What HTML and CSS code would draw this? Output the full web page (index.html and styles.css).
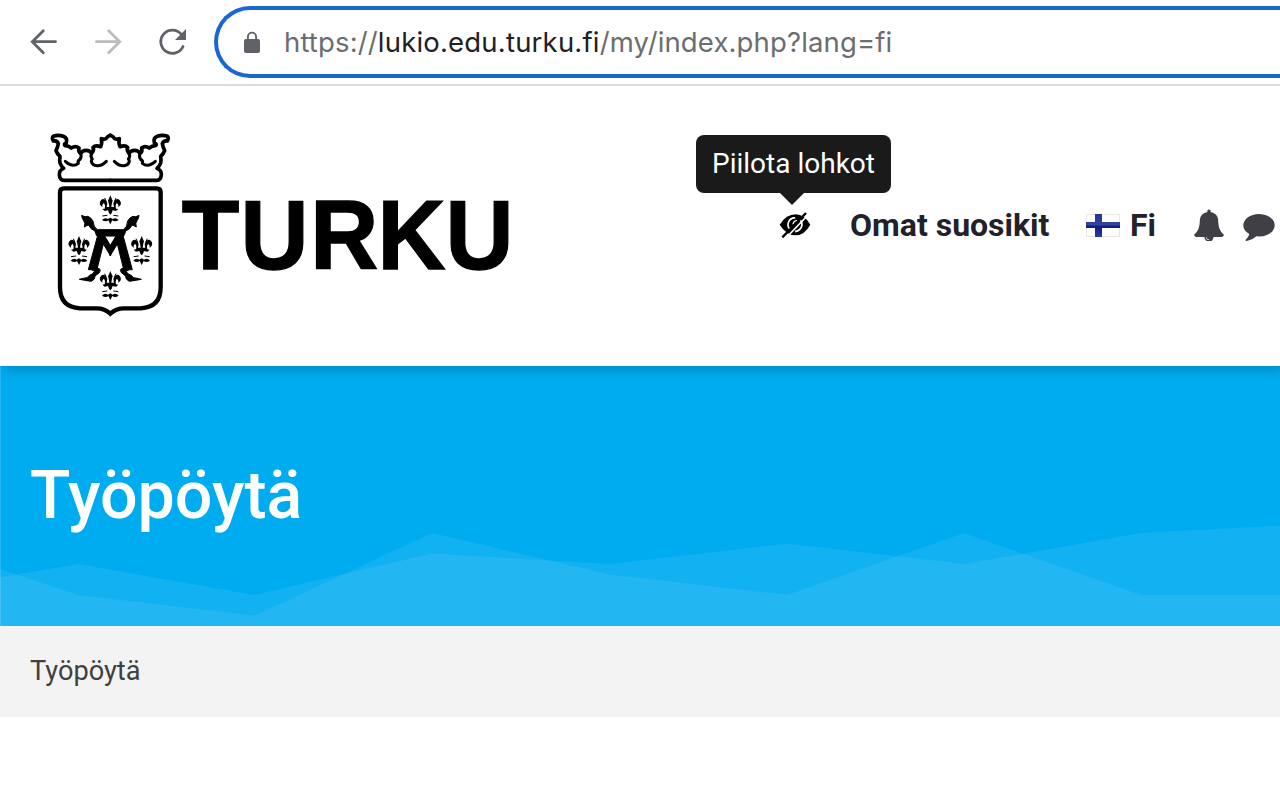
FILE: index.html
```html
<!DOCTYPE html>
<html lang="fi">
<head>
<meta charset="utf-8">
<title>Työpöytä</title>
<link rel="stylesheet" href="styles.css">
</head>
<body>
<div class="toolbar">
  <svg class="nav-icons" width="214" height="84" viewBox="0 0 214 84" fill="none" stroke-width="2.8" stroke-linecap="round">
    <path stroke="#5f6368" d="M55.500 41.700H32.500M43.300 30.700L32.300 41.700L43.300 52.700"/>
    <path stroke="#babcbe" d="M96.500 41.700H119.500M108.700 30.700L119.700 41.700L108.700 52.700"/>
    <path stroke="#5f6368" d="M181.300 34.300A11.600 11.600 0 1 0 183 46.500"/>
    <path fill="#5f6368" d="M186 29V40H175Z"/>
  </svg>
  <div class="address">
    <svg class="lock" width="18" height="24" viewBox="0 0 18 24"><rect x="1" y="9" width="16" height="14" rx="2" fill="#5f6368"/><path d="M4.900 10V6.700a4.100 4.100 0 0 1 8.200 0V10" fill="none" stroke="#5f6368" stroke-width="1.900"/></svg>
    <div class="url"><span class="scheme">https://</span><span class="host">lukio.edu.turku.fi</span><span class="path">/my/index.php?lang=fi</span></div>
  </div>
</div>
<header class="site-header">
  <svg class="logo" width="490" height="200" viewBox="0 0 1470 600">
    <defs>
      <g id="crown-half" fill="none" stroke="#000" stroke-linejoin="round" stroke-linecap="round">
        <path stroke-width="11" d="M211 31Q202 34 198 41Q192 44 184 41Q187 55 182 65Q166 59 159 67Q163 76 155 85Q150 76 138 76Q127 76 122 85Q114 82 117 69Q107 61 94 69Q86 62 75 62Q70 58 79 53Q83 39 70 34Q56 29 41 33Q34 39 40 48Q51 45 55 56Q53 67 48 77Q51 86 60 94Q58 105 60 114Q63 123 71 130Q57 136 58 149Q59 166 72 166H211"/>
        <path stroke-width="9" d="M122 85Q126 97 120 103Q112 107 115 115Q98 129 76 109"/>
        <path stroke-width="9" d="M155 85Q150 95 157 102Q150 109 160 119Q179 129 199 109"/>
      </g>
      <g id="lily">
        <path d="M0-31Q3-23 7-15Q4-6 3 4H11Q10-1 9-7Q13-20 23-20Q34-14 31-3L24 5Q26-3 20-8Q14-3 17 9L24 10L17 16L7 14L4 22L0 27L-4 22L-7 14L-17 16L-24 10L-17 9Q-14-3-20-8Q-26-3-24 5L-31-3Q-34-14-23-20Q-13-20-9-7Q-10-1-11 4H-3Q-4-6-7-15Q-3-23 0-31Z"/>
        <path d="M-25 43Q-17 34-7 40L0 36L7 40Q17 34 25 43Q14 50 6 44L0 56L-6 44Q-14 50-25 43Z"/>
        <path d="M-17-23L-12-12M17-23L12-12M-24 31L-9 29M24 31L9 29" stroke="#000" stroke-width="3"/>
      </g>
      <g id="monogram-half">
        <path d="M125 271Q136 278 143 274Q152 276 159 288Q160 307 172 314H212V333H194L212 363V393L190 357L172 429Q180 430 181 436Q180 444 170 449Q164 452 163 462Q155 472 147 468L118 463Q132 459 141 458Q149 449 157 447L164 439Q154 432 145 434L172 335Q168 330 165 318Q151 313 146 300Q139 302 133 306Q137 295 131 287Q126 282 125 271Z" stroke="#000" stroke-width="3"/>
      </g>
    </defs>
    <use href="#crown-half"/>
    <use href="#crown-half" transform="matrix(-1 0 0 1 422 0)"/>
    <path d="M72 190H350Q362 190 362 202V487Q362 547 302 550H252Q228 550 211 566Q194 550 170 550H120Q60 547 60 487V202Q60 190 72 190Z" fill="none" stroke="#000" stroke-width="13"/>
    <use href="#lily" x="211" y="242"/>
    <use href="#lily" x="117" y="364"/>
    <use href="#lily" x="305" y="364"/>
    <use href="#lily" x="211" y="469"/>
    <use href="#monogram-half"/>
    <use href="#monogram-half" transform="matrix(-1 0 0 1 422 0)"/>
    <text class="wordmark" transform="scale(.955 1)" x="445 630 849 1060 1274" y="431">TURKU</text>
  </svg>
  <nav class="menu">
    <div class="toggle">
      <div class="tooltip">Piilota lohkot</div>
      <svg width="32" height="28" viewBox="0 0 96 84">
        <path d="M2 41Q22 10 50 10Q76 10 94 41Q76 73 50 73Q22 73 2 41Z"/>
        <path d="M49 21A20 20 0 0 0 34 56" fill="none" stroke="#fff" stroke-width="5"/>
        <path d="M63 26Q70 33 69 42Q66 59 48 62" fill="none" stroke="#fff" stroke-width="5"/>
        <path d="M54 29Q44 29 42 40" fill="none" stroke="#fff" stroke-width="4"/>
        <path d="M18 84L87 12" stroke="#fff" stroke-width="5"/>
        <path d="M10 79L81 6" stroke="#000" stroke-width="7"/>
      </svg>
    </div>
    <a class="favourites">Omat suosikit</a>
    <div class="language">
      <svg width="34" height="23" viewBox="0 0 34 23">
        <defs><linearGradient id="blue" x2="0" y2="1"><stop stop-color="#25349a"/><stop offset=".46" stop-color="#35439f"/><stop offset=".54" stop-color="#101d7e"/><stop offset="1" stop-color="#263ba8"/></linearGradient></defs>
        <rect x=".5" y=".5" width="33" height="22" fill="#fff" stroke="#e8e8e8"/>
        <path d="M9 0h7v8h18v6H16v9H9v-9H0V8h9z" fill="url(#blue)"/>
      </svg>
      <span>Fi</span>
    </div>
    <svg class="bell" width="32" height="32" viewBox="0 -30 1792 1792" fill="#403f45"><path d="M912 1696q0-16-16-16-59 0-101.500-42.500t-42.500-101.500q0-16-16-16t-16 16q0 73 51.500 124.500t124.500 51.500q16 0 16-16zm816-288q0 52-38 90t-90 38h-448q0 106-75 181t-181 75-181-75-75-181h-448q-52 0-90-38t-38-90q50-42 91-88t85-119.500 74.500-158.500 50-206 19.500-260q0-152 117-282.500t307-158.500q-8-19-8-39 0-40 28-68t68-28 68 28 28 68q0 20-8 39 190 28 307 158.500t117 282.500q0 139 19.500 260t50 206 74.500 158.500 85 119.500 91 88z"/></svg>
    <svg class="comment" width="32" height="32" viewBox="0 -30 1792 1822" fill="#403f45"><path d="M1792 896q0 174-120 321.500t-326 233-450 85.500q-70 0-145-8-198 175-460 242-49 14-114 22-17 2-30.500-9t-17.500-29v-1q-3-4-.5-12t2-10 4.500-9.500l6-9 7-8.500 8-9q7-8 31-34.500t34.500-38 31-39.500 32.500-51 27-59 26-76q-157-89-247.500-220t-90.500-281q0-130 71-248.500t191-204.500 286-136.500 348-50.500q244 0 450 85.500t326 233 120 321.500z"/></svg>
  </nav>
</header>
<section class="hero">
  <h1>Työpöytä</h1>
  <svg class="waves" width="1280" height="110" viewBox="0 516 1280 110" fill="#fff" fill-opacity=".07">
    <path d="M0 577.500L78 564L254 595L432 553.500L610 564L787 543.500L964 564L1141 533L1280 525.500V626H0Z"/>
    <path d="M0 569L78 595L255 615.500L432 533L610 574.500L787 595L964 533L1141 595H1280V626H0Z"/>
  </svg>
</section>
<div class="breadcrumb">Työpöytä</div>
</body>
</html>
```

FILE: styles.css
```css
* { box-sizing: border-box; }
body {
  margin: 0;
  width: 1280px;
  height: 800px;
  overflow: hidden;
  background: #fff;
  font-family: Roboto, sans-serif;
  color: #22212a;
}
svg { display: block; flex: none; }
.toolbar {
  position: relative;
  z-index: 2;
  display: flex;
  height: 86px;
  border-bottom: 2px solid #dcdcdc;
  background: #fff;
}
.address {
  display: flex;
  align-items: center;
  flex: 1;
  height: 72px;
  margin-top: 6px;
  padding-left: 25px;
  border: 4px solid #1967d2;
  border-right: 0;
  border-radius: 36px 0 0 36px;
}
.url {
  margin-left: 23px;
  font: 27.5px/40px Inter, sans-serif;
  letter-spacing: .14px;
  color: #6b6d70;
  white-space: nowrap;
}
.host { color: #202124; letter-spacing: .2px; }
.site-header {
  position: relative;
  z-index: 1;
  display: flex;
  height: 280px;
  padding: 39px 0 0 40px;
  background: #fff;
  box-shadow: 4px 4px 12px rgba(0, 0, 0, .2);
}
.wordmark {
  font: bold 296px "Liberation Sans", sans-serif;
  stroke: #000;
  stroke-width: 4px;
}
.menu {
  display: flex;
  align-items: center;
  height: 40px;
  margin: 80px 0 0 249px;
}
.toggle { position: relative; }
.tooltip {
  position: absolute;
  left: -83px;
  bottom: 46px;
  width: 195px;
  height: 58px;
  border-radius: 8px;
  background: #1a1a1a;
  color: #fff;
  font-size: 28px;
  line-height: 57px;
  text-align: center;
  white-space: nowrap;
}
.tooltip::after {
  content: "";
  position: absolute;
  top: 58px;
  left: 84px;
  border: 12px solid transparent;
  border-top-color: #1a1a1a;
  border-bottom: 0;
}
.favourites, .language {
  font-size: 32px;
  line-height: 40px;
  font-weight: 700;
  white-space: nowrap;
}
.favourites { margin-left: 39px; width: 200px; }
.language {
  display: flex;
  align-items: center;
  gap: 10px;
  width: 71px;
  margin-left: 36px;
}
.bell { margin-left: 36px; }
.comment { margin-left: 18px; }
.hero {
  display: flex;
  flex-direction: column;
  justify-content: space-between;
  height: 260px;
  padding-top: 89px;
  background: #00acf0;
  box-shadow: inset 1px 0 #22b6f2;
}
h1 {
  height: 60px;
  margin: 0;
  padding-left: 30px;
  font-size: 66.3px;
  line-height: 80px;
  font-weight: 500;
  color: #fff;
}
.breadcrumb {
  height: 91px;
  padding-left: 30px;
  background: #f3f3f3;
  color: #404040;
  font-size: 27.2px;
  line-height: 90px;
}
```
